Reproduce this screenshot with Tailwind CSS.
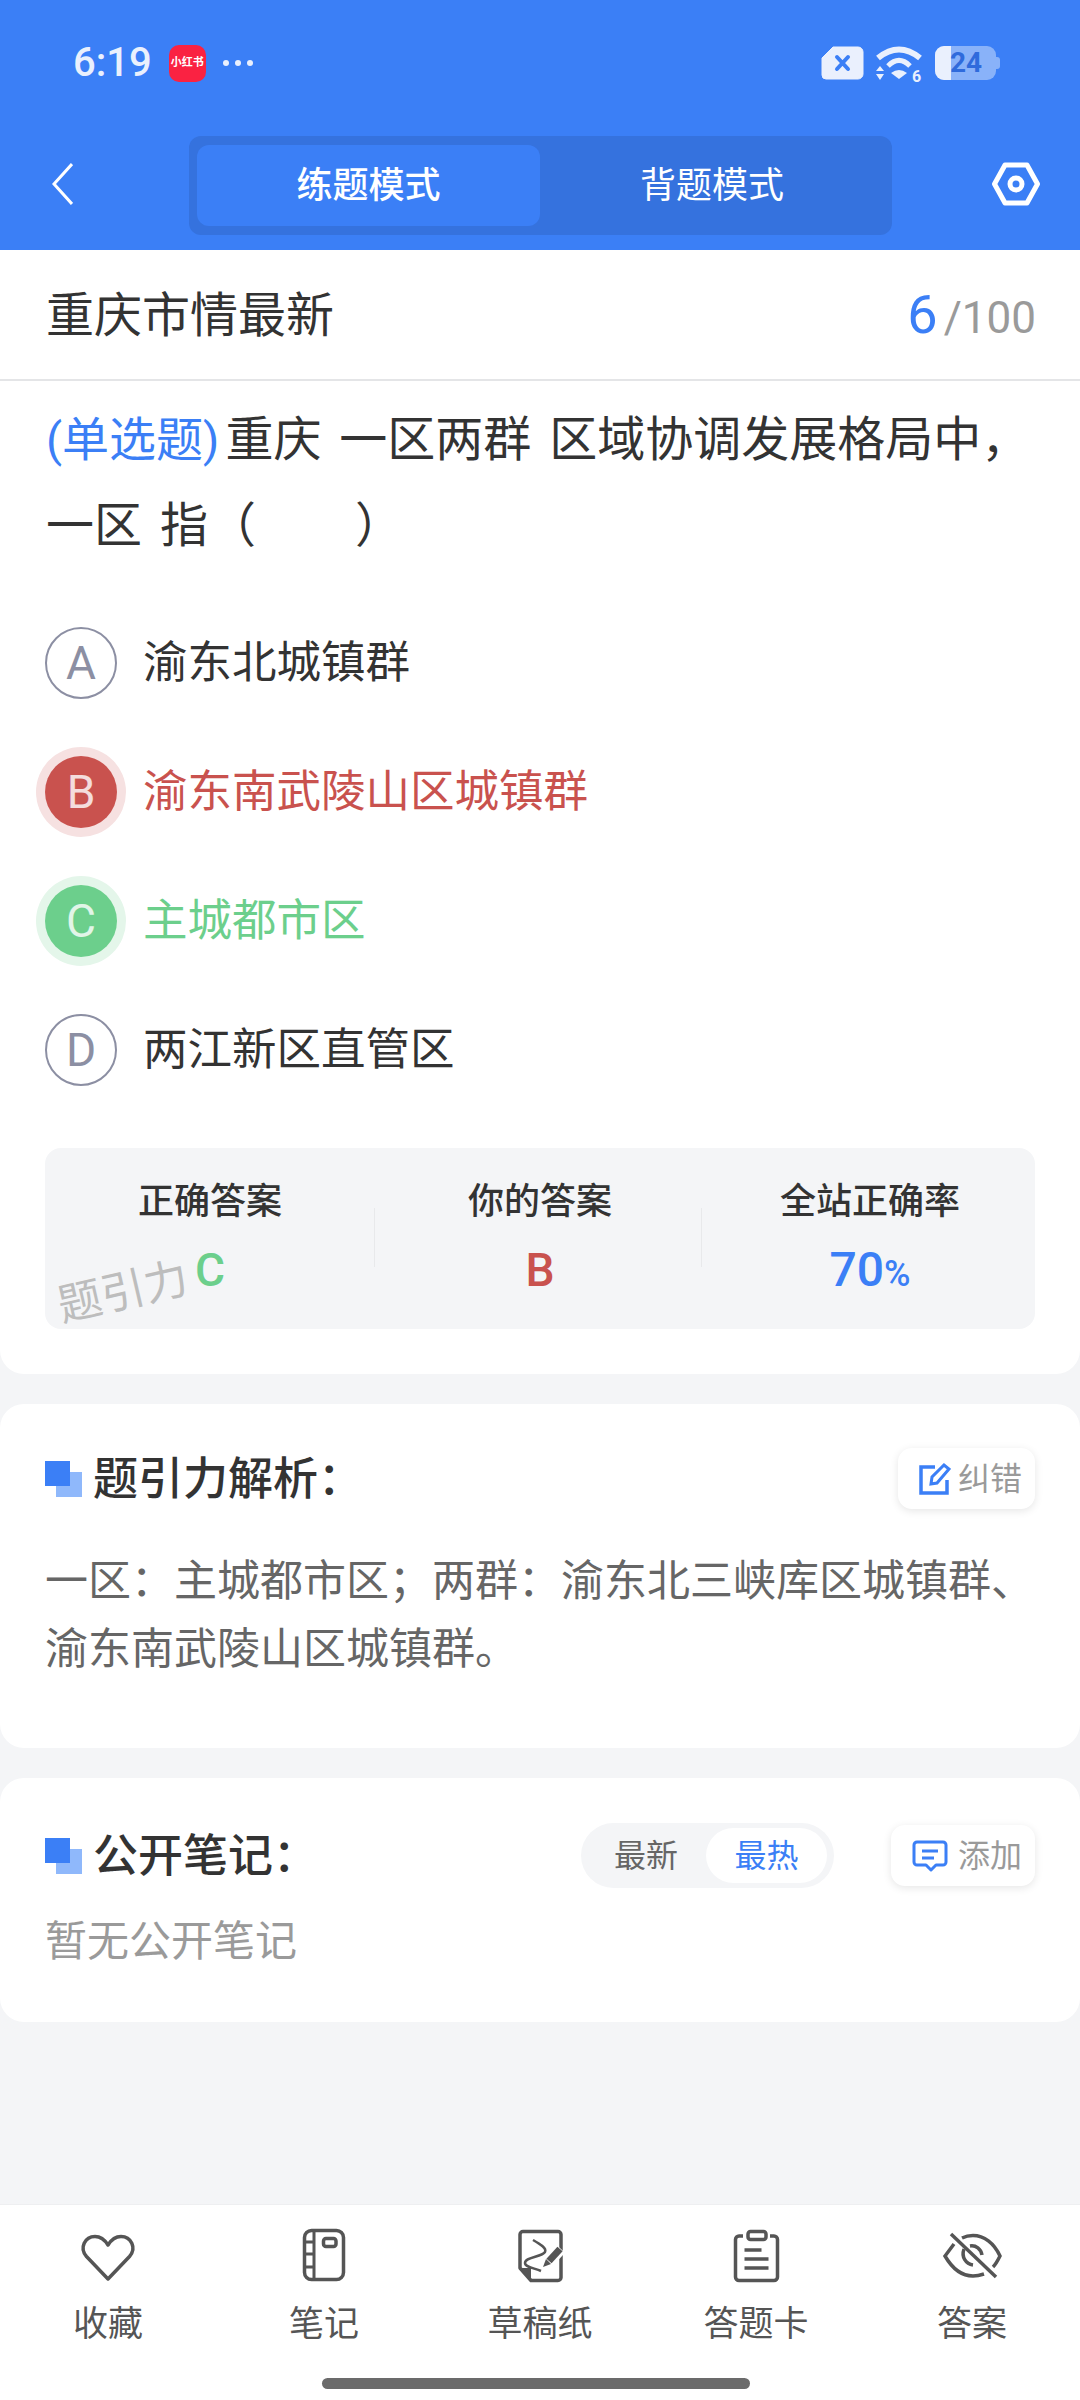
<!DOCTYPE html>
<html lang="zh-CN">

<head>
    <meta charset="UTF-8" />
    <meta name="viewport" content="width=device-width, initial-scale=1.0" />
    <title>题引力</title>
    <script src="https://cdn.jsdelivr.net/npm/@tailwindcss/browser@4"></script>
</head>

<body class="bg-[#f4f5f7] font-['Roboto','Noto_Sans_CJK_SC',sans-serif]">
    <div class="w-[1080px] h-[2400px] flex flex-col overflow-hidden">

        <!-- blue header -->
        <div class="bg-[#3b7ff6] h-[250px] shrink-0 flex flex-col">
            <div class="h-[136px] pl-[73px] pr-[80px] pt-[38px] flex items-start justify-between">
                <div class="flex items-center gap-[17px] h-[50px]">
                    <span class="text-[#eaf0fd] text-[40px] font-medium">6:19</span>
                    <span class="w-[37px] h-[37px] rounded-[10px] bg-[#fa2242] text-white text-[11px] font-bold flex items-center justify-center">小红书</span>
                    <span class="flex gap-[6px]">
                        <i class="w-[6px] h-[6px] rounded-full bg-[#eaf0fd]"></i>
                        <i class="w-[6px] h-[6px] rounded-full bg-[#eaf0fd]"></i>
                        <i class="w-[6px] h-[6px] rounded-full bg-[#eaf0fd]"></i>
                    </span>
                </div>
                <div class="flex items-center h-[50px]">
                    <svg width="43" height="34" viewBox="0 0 43 34">
                        <path d="M12 1 H37 a5 5 0 0 1 5 5 V28 a5 5 0 0 1-5 5 H5 a4 4 0 0 1-4-4 V12Z" fill="#eaf0fd" stroke="#eaf0fd" stroke-linejoin="round" />
                        <path d="M16 11 L27 23 M27 11 L16 23" stroke="#3b7ff6" stroke-width="4" stroke-linecap="round" />
                    </svg>
                    <svg class="ml-[11px]" width="48" height="44" viewBox="0 0 48 44">
                        <path d="M3 17 Q24 0 45 17" fill="none" stroke="#eaf0fd" stroke-width="6" />
                        <path d="M13 25 Q24 14 35 25" fill="none" stroke="#eaf0fd" stroke-width="5" />
                        <path d="M16 32 Q24 26 32 32 L24 38Z" fill="#eaf0fd" />
                        <path d="M1 30 L5 25 L9 30Z M1 33 L9 33 L5 39Z" fill="#eaf0fd" />
                        <text x="37" y="41" font-size="16" font-weight="700" fill="#eaf0fd" font-family="Roboto">6</text>
                    </svg>
                    <div class="ml-[12px] flex items-center">
                        <div class="relative w-[61px] h-[34px] rounded-[9px] bg-white/40 overflow-hidden">
                            <div class="w-[16px] h-full bg-[#eaf0fd]"></div>
                            <span class="absolute left-[15px] top-0 h-full flex items-center text-[#2f6bdc] text-[28px] font-bold leading-none">24</span>
                        </div>
                        <i class="w-[4px] h-[12px] rounded-r-[3px] bg-white/40"></i>
                    </div>
                </div>
            </div>

            <div class="flex items-start pl-[52px]">
                <svg class="mt-[27px]" width="21" height="42" viewBox="0 0 21 42">
                    <path d="M20 1 L2 21 L20 41" fill="none" stroke="#fff" stroke-width="3" />
                </svg>
                <div class="w-[703px] h-[99px] ml-[116px] px-[8px] py-[9px] rounded-[12px] bg-[#3572de] flex">
                    <div class="w-[343px] rounded-[12px] bg-[#3b7ff6] text-white text-[36px] font-medium flex items-center justify-center">练题模式</div>
                    <div class="flex-1 text-white text-[36px] flex items-center justify-center">背题模式</div>
                </div>
                <svg class="ml-[100px] mt-[26px]" width="48" height="44" viewBox="0 0 48 44">
                    <path d="M13 3 H35 L45.5 22 L35 41 H13 L2.5 22Z" fill="none" stroke="#fff" stroke-width="5" stroke-linejoin="round" />
                    <circle cx="24" cy="22" r="6" fill="none" stroke="#fff" stroke-width="5" />
                </svg>
            </div>
        </div>

        <!-- question card -->
        <div class="bg-white rounded-b-[24px] pb-[45px] shrink-0">
            <div class="h-[131px] pl-[46px] pr-[44px] border-b-2 border-[#e4e5e7] flex items-center justify-between">
                <span class="text-[#333] text-[48px] pt-[2px]">重庆市情最新</span>
                <span class="flex items-baseline text-[#9a9a9a] text-[44px]"><span class="text-[#3b7ff6] text-[54px]">6</span><span class="ml-[6px]">/</span>100</span>
            </div>

            <p class="px-[46px] pt-[16px] text-[#333] text-[48px] leading-[86px] h-[187px] [word-spacing:6px] whitespace-nowrap"><span class="text-[#3b7ff6] text-[47px] mr-[6px]">(单选题)</span>重庆 一区两群 区域协调发展格局中，<br />一区 指（<span class="inline-block w-[99px]"></span>）</p>

            <div class="px-[45px] flex flex-col gap-[57px] mt-[59px]">
                <div class="flex items-center gap-[26px] h-[72px]">
                    <span class="w-[72px] h-[72px] rounded-full border-2 border-[#8c8fa3] text-[#8c8fa3] text-[46px] flex items-center justify-center">A</span>
                    <span class="text-[#333] text-[44.5px]">渝东北城镇群</span>
                </div>
                <div class="flex items-center gap-[26px] h-[72px]">
                    <span class="w-[72px] h-[72px] rounded-full bg-[#c9524e] ring-[9px] ring-[#f6e1e1] text-white/80 text-[46px] flex items-center justify-center">B</span>
                    <span class="text-[#c9524e] text-[44.5px]">渝东南武陵山区城镇群</span>
                </div>
                <div class="flex items-center gap-[26px] h-[72px]">
                    <span class="w-[72px] h-[72px] rounded-full bg-[#6ccf8c] ring-[9px] ring-[#e4f6ea] text-white/80 text-[46px] flex items-center justify-center">C</span>
                    <span class="text-[#6ccf8c] text-[44.5px]">主城都市区</span>
                </div>
                <div class="flex items-center gap-[26px] h-[72px]">
                    <span class="w-[72px] h-[72px] rounded-full border-2 border-[#8c8fa3] text-[#8c8fa3] text-[46px] flex items-center justify-center">D</span>
                    <span class="text-[#333] text-[44.5px]">两江新区直管区</span>
                </div>
            </div>

            <div class="relative mx-[45px] mt-[62px] h-[181px] rounded-[16px] bg-[#f4f5f7] grid grid-cols-3">
                <div class="flex flex-col items-center pt-[29px]">
                    <span class="text-[#333] text-[36px] font-medium leading-[50px]">正确答案</span>
                    <span class="text-[#6ccf8c] text-[46px] font-medium leading-[50px] mt-[18px]">C</span>
                </div>
                <div class="flex flex-col items-center pt-[29px] relative">
                    <span class="text-[#333] text-[36px] font-medium leading-[50px]">你的答案</span>
                    <span class="text-[#c9524e] text-[46px] font-medium leading-[50px] mt-[18px]">B</span>
                    <i class="absolute left-[-1px] top-[60px] h-[59px] w-px bg-[#e8e9eb]"></i>
                    <i class="absolute right-[3px] top-[60px] h-[59px] w-px bg-[#e8e9eb]"></i>
                </div>
                <div class="flex flex-col items-center pt-[29px]">
                    <span class="text-[#333] text-[36px] font-medium leading-[50px]">全站正确率</span>
                    <span class="text-[#3b7ff6] text-[48px] font-medium leading-[50px] mt-[18px]">70<span class="text-[36px]">%</span></span>
                </div>
                <span class="absolute left-[12px] top-[122px] text-[#bdbdbd] text-[44px] leading-none -rotate-[13deg]">题引力</span>
            </div>
        </div>

        <!-- analysis card -->
        <div class="bg-white rounded-[24px] mt-[30px] h-[344px] shrink-0 px-[45px] pt-[44px]">
            <div class="flex items-center justify-between h-[61px]">
                <div class="flex items-center gap-[11px]">
                    <span class="relative w-[37px] h-[36px]">
                        <i class="absolute right-0 bottom-0 w-[26px] h-[25px] bg-[#8fb8fb]"></i>
                        <i class="absolute left-0 top-0 w-[25px] h-[25px] bg-[#3b7ff6]"></i>
                    </span>
                    <span class="text-[#333] text-[45px] font-medium pt-[2px]">题引力解析：</span>
                </div>
                <div class="w-[137px] h-[61px] pl-[21px] rounded-[14px] bg-white shadow-[0_2px_8px_rgba(0,0,0,0.1)] flex items-center gap-[7px] text-[#9a9a9a] text-[32px]">
                    <svg width="32" height="32" viewBox="0 0 32 32">
                        <path d="M16 4 H2 V30 H28 V17" fill="none" stroke="#3b7ff6" stroke-width="3.5" />
                        <path d="M12 21 L13 14 L25 2 L30 6 L18 20Z" fill="none" stroke="#3b7ff6" stroke-width="3" />
                    </svg>
                    纠错
                </div>
            </div>
            <p class="mt-[38px] text-[#666] text-[43px] leading-[68px] whitespace-nowrap">一区：主城都市区；两群：渝东北三峡库区城镇群、<br />渝东南武陵山区城镇群。</p>
        </div>

        <!-- notes card -->
        <div class="bg-white rounded-[24px] mt-[30px] h-[244px] shrink-0 px-[45px] pt-[45px]">
            <div class="flex items-center h-[65px]">
                <span class="relative w-[37px] h-[36px] mr-[11px]">
                    <i class="absolute right-0 bottom-0 w-[26px] h-[25px] bg-[#8fb8fb]"></i>
                    <i class="absolute left-0 top-0 w-[25px] h-[25px] bg-[#3b7ff6]"></i>
                </span>
                <span class="text-[#333] text-[45px] font-medium pt-[3px]">公开笔记：</span>
                <div class="ml-auto w-[253px] h-[65px] rounded-full bg-[#f4f5f7] p-[5px] flex text-[32px]">
                    <span class="w-[120px] text-[#666] flex items-center justify-center">最新</span>
                    <span class="w-[121px] rounded-full bg-white text-[#3b7ff6] flex items-center justify-center">最热</span>
                </div>
                <div class="ml-[57px] w-[144px] h-[61px] pl-[21px] rounded-[14px] bg-white shadow-[0_2px_8px_rgba(0,0,0,0.1)] flex items-center gap-[10px] text-[#9a9a9a] text-[32px]">
                    <svg width="36" height="32" viewBox="0 0 36 32">
                        <path d="M5 2 H31 a3 3 0 0 1 3 3 V22 a3 3 0 0 1-3 3 H24 L19 30 L14 25 H5 a3 3 0 0 1-3-3 V5 a3 3 0 0 1 3-3Z" fill="none" stroke="#3b7ff6" stroke-width="3" stroke-linejoin="round" />
                        <path d="M10 11 H26 M10 18 H22" stroke="#3b7ff6" stroke-width="3" />
                    </svg>
                    添加
                </div>
            </div>
            <p class="mt-[25px] text-[#9a9a9a] text-[42px] leading-[58px]">暂无公开笔记</p>
        </div>

        <div class="flex-1"></div>

        <!-- bottom bar -->
        <div class="bg-white h-[196px] shrink-0 relative border-t border-[#eeeff1] text-[#555]">
            <div class="grid grid-cols-5 pt-[23px]">
                <div class="flex flex-col items-center">
                    <svg width="60" height="56" viewBox="0 0 60 56">
                        <path d="M30 51 L8.5 28.5 C1 20 7 8.5 17 8.5 C23 8.5 27.5 13 30 17 C32.5 13 37 8.5 43 8.5 C53 8.5 59 20 51.5 28.5Z" fill="none" stroke="#555" stroke-width="3.5" stroke-linejoin="round" />
                    </svg>
                    <span class="text-[35px] leading-[50px] mt-[16px]">收藏</span>
                </div>
                <div class="flex flex-col items-center">
                    <svg width="60" height="56" viewBox="0 0 60 56">
                        <rect x="10.5" y="2.5" width="39" height="49" rx="7" fill="none" stroke="#555" stroke-width="3.5" />
                        <path d="M20 2.5 V51.5 M10.5 14 H20 M10.5 26 H20 M10.5 39 H20" stroke="#555" stroke-width="3" fill="none" />
                        <rect x="29.5" y="10.5" width="12.5" height="8" rx="2.5" fill="none" stroke="#555" stroke-width="3.5" />
                    </svg>
                    <span class="text-[35px] leading-[50px] mt-[16px]">笔记</span>
                </div>
                <div class="flex flex-col items-center">
                    <svg width="60" height="56" viewBox="0 0 60 56">
                        <path d="M21 52.5 H48 a3 3 0 0 0 3-3 V6.5 a3 3 0 0 0-3-3 H13 a3 3 0 0 0-3 3 V40Z" fill="none" stroke="#555" stroke-width="3.5" stroke-linejoin="round" />
                        <path d="M10 40 H21 V53Z" fill="#555" />
                        <path d="M23 12 C30 16 37 20 35 24 C32 29 15 29 15 35 C15 39 24 40 31 43" fill="none" stroke="#555" stroke-width="2.5" />
                        <path d="M51 21 L39 34" stroke="#fff" stroke-width="11" />
                        <path d="M50 21 L39 33" stroke="#555" stroke-width="7" />
                        <path d="M36 31 L41 36 L33 39Z" fill="#555" />
                    </svg>
                    <span class="text-[35px] leading-[50px] mt-[16px]">草稿纸</span>
                </div>
                <div class="flex flex-col items-center">
                    <svg width="60" height="56" viewBox="0 0 60 56">
                        <path d="M17 8 H13 a3.5 3.5 0 0 0-3.5 3.5 V49 a3.5 3.5 0 0 0 3.5 3.5 H48 a3.5 3.5 0 0 0 3.5-3.5 V11.5 a3.5 3.5 0 0 0-3.5-3.5 H44" fill="none" stroke="#555" stroke-width="3.5" />
                        <rect x="22" y="3.5" width="18" height="8" rx="2.5" fill="none" stroke="#555" stroke-width="3.5" />
                        <path d="M18.5 22 H35.5 M18.5 31 H42.5 M18.5 40 H42.5" stroke="#555" stroke-width="3.5" />
                    </svg>
                    <span class="text-[35px] leading-[50px] mt-[16px]">答题卡</span>
                </div>
                <div class="flex flex-col items-center">
                    <svg width="60" height="56" viewBox="0 0 60 56">
                        <path d="M12 16 L3 28 C10 40 20 48 31 48 C35 48 39 47 42 46" fill="none" stroke="#555" stroke-width="3.5" />
                        <path d="M20 10 C24 8 28 7.5 31 7.5 C42 7.5 52 15 58 28 C56 32 54 36 51 39" fill="none" stroke="#555" stroke-width="3.5" />
                        <path d="M9 6 L54 49" stroke="#555" stroke-width="3.5" />
                        <path d="M22 21 C19 29 24 36 31 37 M28 18 C34 17 39 21 40 27" fill="none" stroke="#555" stroke-width="3.5" />
                    </svg>
                    <span class="text-[35px] leading-[50px] mt-[16px]">答案</span>
                </div>
            </div>
            <div class="absolute left-[322px] bottom-[11px] w-[428px] h-[11px] rounded-full bg-[#6b6b6b]"></div>
        </div>

    </div>
</body>

</html>
